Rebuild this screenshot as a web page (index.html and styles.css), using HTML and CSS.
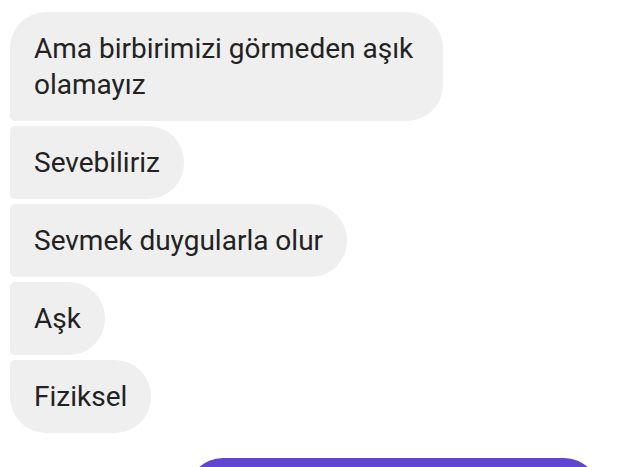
FILE: index.html
```html
<!DOCTYPE html>
<html lang="tr">
<head>
<meta charset="utf-8">
<title>Sohbet</title>
<link rel="stylesheet" href="styles.css">
</head>
<body>
<div class="chat">
  <div class="group incoming">
    <div class="bubble first">Ama birbirimizi görmeden aşık olamayız</div>
    <div class="bubble">Sevebiliriz</div>
    <div class="bubble">Sevmek duygularla olur</div>
    <div class="bubble">Aşk</div>
    <div class="bubble last">Fiziksel</div>
  </div>
  <div class="group outgoing">
    <div class="bubble out first"></div>
  </div>
</div>
</body>
</html>
```

FILE: styles.css
```css
html, body {
  margin: 0;
  padding: 0;
  height: 467px;
  overflow: hidden;
  background: #ffffff;
}

.chat {
  display: flex;
  flex-direction: column;
  gap: 25px;
  padding: 12px 0 0 10px;
  font-family: Roboto, "Liberation Sans", sans-serif;
}

.group {
  display: flex;
  flex-direction: column;
  gap: 5px;
}

.incoming {
  align-items: flex-start;
}

.outgoing {
  align-items: flex-end;
  padding-right: 18px;
}

.bubble {
  box-sizing: border-box;
  max-width: 433px;
  padding: 18.5px 24px;
  font-size: 28px;
  line-height: 36px;
  color: #222222;
  background: #efefef;
  border-radius: 5px 36px 36px 5px;
}

.bubble.first {
  border-top-left-radius: 36px;
}

.bubble.last {
  border-bottom-left-radius: 36px;
}

.bubble.out {
  width: 413px;
  height: 73px;
  background: #6045d3;
  border-radius: 36px 36px 5px 36px;
}
```
